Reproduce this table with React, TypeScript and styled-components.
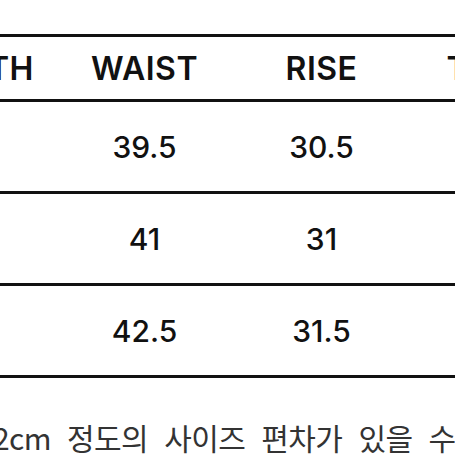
import React from "react";
import styled, { createGlobalStyle } from "styled-components";

const GlobalStyle = createGlobalStyle`
  html, body {
    margin: 0;
    padding: 0;
    background: #fff;
    overflow: hidden;
  }
  body {
    width: 455px;
    height: 455px;
  }
`;

const columns = ["LENGTH", "WAIST", "RISE", "THIGH"];

const rows = [
  ["100", "39.5", "30.5", "33"],
  ["102", "41", "31", "34"],
  ["104", "42.5", "31.5", "35"],
];

function App() {
  return (
    <Page>
      <GlobalStyle />
      <Chart>
        <HeadRow>
          {columns.map((col) => (
            <HeadCell key={col}>{col}</HeadCell>
          ))}
        </HeadRow>
        {rows.map((row, i) => (
          <DataRow key={i}>
            {row.map((val, j) => (
              <DataCell key={j}>{val}</DataCell>
            ))}
          </DataRow>
        ))}
      </Chart>
      <Note>2cm 정도의 사이즈 편차가 있을 수 있습니다.</Note>
    </Page>
  );
}

const Page = styled.div`
  width: 455px;
  height: 455px;
  overflow: hidden;
  padding-top: 34px;
  box-sizing: border-box;
`;

const Chart = styled.div`
  display: flex;
  flex-direction: column;
  width: 708px;
  margin-left: -121px;
  border-top: 3px solid #111;
`;

const Row = styled.div`
  display: grid;
  grid-template-columns: repeat(4, 177px);
  align-items: center;
  border-bottom: 3px solid #111;
`;

const HeadRow = styled(Row)`
  height: 62px;
`;

const DataRow = styled(Row)`
  height: 89px;
`;

const HeadCell = styled.div`
  text-align: center;
  font-family: "Inter", "Liberation Sans", sans-serif;
  font-weight: 600;
  font-size: 32px;
  color: #111;
  letter-spacing: 0.5px;
`;

const DataCell = styled.div`
  text-align: center;
  font-family: "Inter", "Liberation Sans", sans-serif;
  font-weight: 500;
  font-size: 30px;
  color: #111;
`;

const Note = styled.div`
  margin-top: 38px;
  margin-left: -7px;
  white-space: nowrap;
  font-family: "Noto Sans CJK KR", "Noto Sans", sans-serif;
  font-weight: 400;
  font-size: 30px;
  line-height: 42px;
  letter-spacing: -0.6px;
  word-spacing: 10px;
  color: #333;
`;

export default App;
